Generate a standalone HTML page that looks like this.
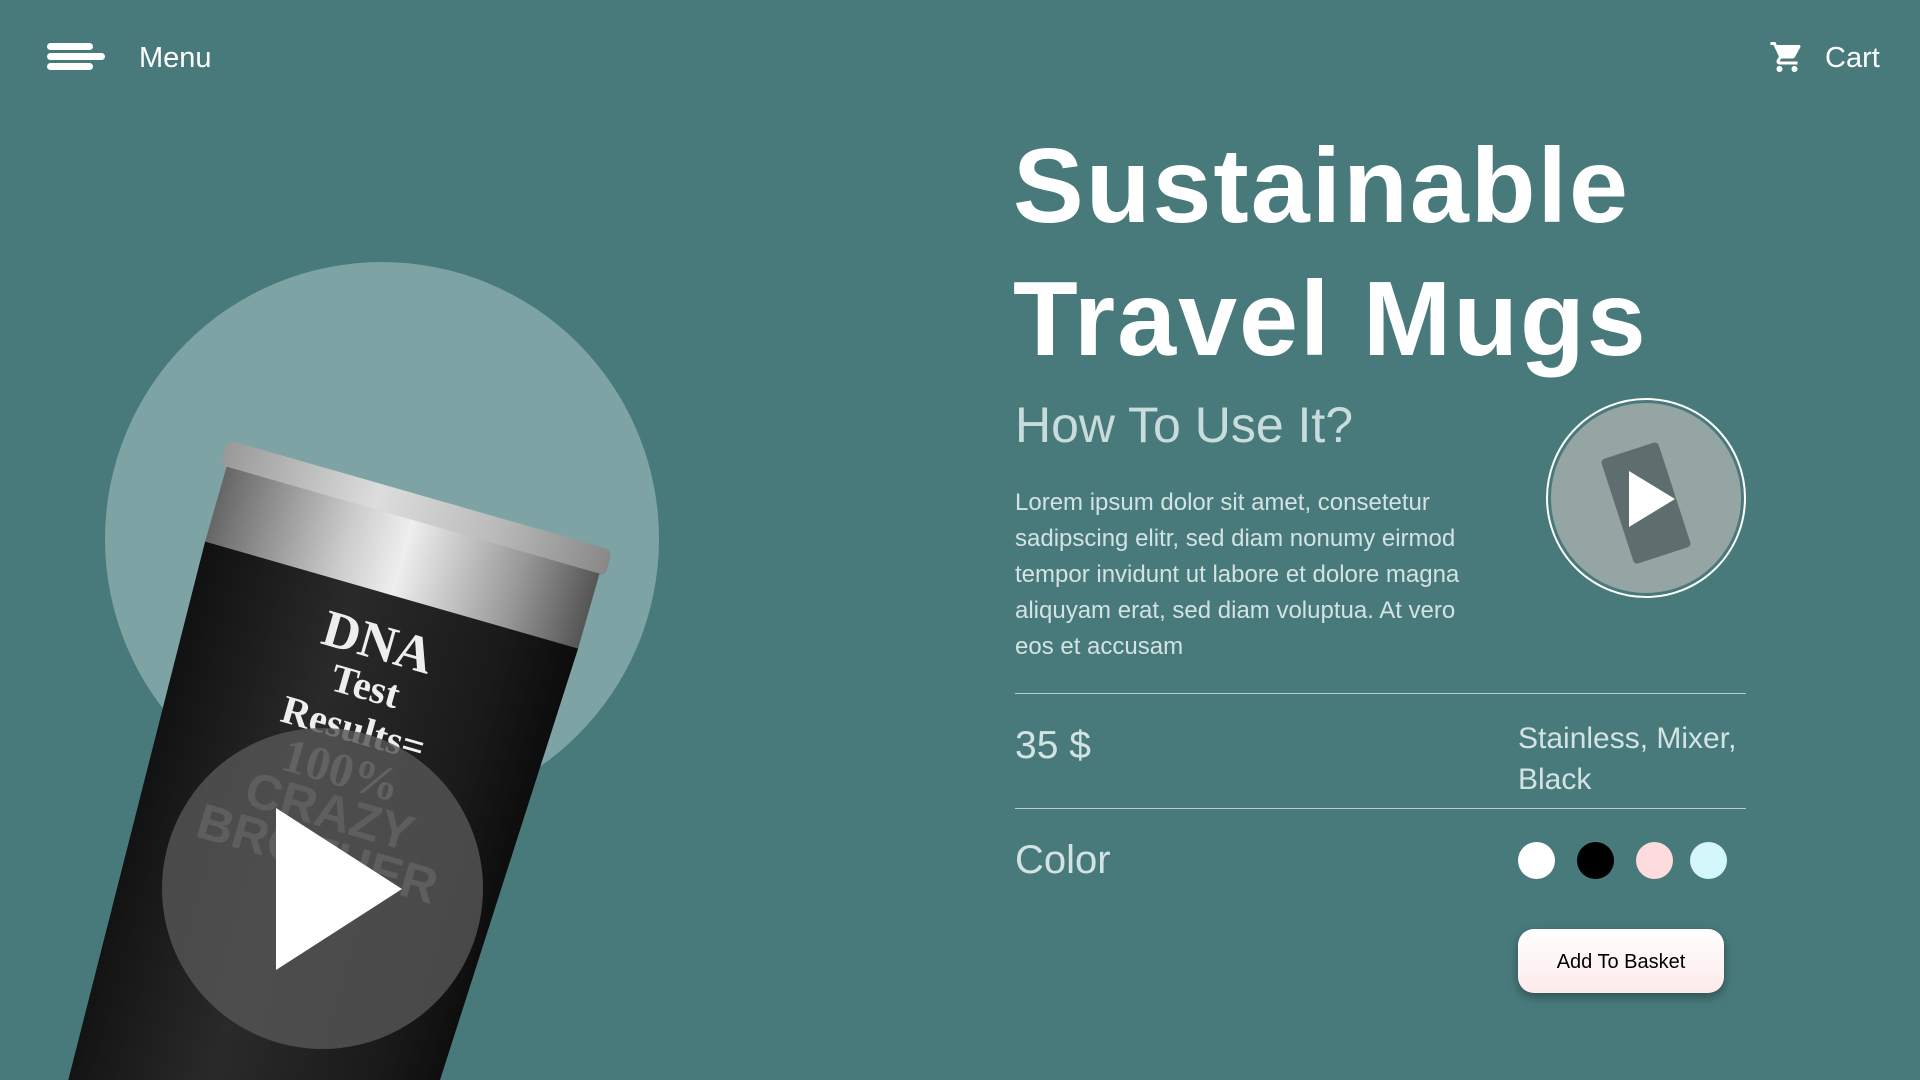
<!DOCTYPE html>
<html><head><meta charset="utf-8"><style>
*{margin:0;padding:0;box-sizing:border-box}
html,body{width:1920px;height:1080px;overflow:hidden;background:#487a7c}
body{font-family:"Liberation Sans",sans-serif;color:#fff}
#wrap{position:relative;width:1920px;height:1080px;overflow:hidden}
.abs{position:absolute}
</style></head><body><div id="wrap">
<div class="abs" style="left:47px;top:43px;width:58px">
<div style="height:7px;width:46px;background:#fff;border-radius:4px"></div>
<div style="height:7px;width:58px;background:#fff;border-radius:4px;margin-top:3px"></div>
<div style="height:7px;width:46px;background:#fff;border-radius:4px;margin-top:3px"></div>
</div>
<div class="abs" style="left:139px;top:42px;font-size:29px">Menu</div>
<svg class="abs" style="left:1769px;top:39px" width="36" height="36" viewBox="0 0 24 24"><path fill="#fff" d="M7 18c-1.1 0-2 .9-2 2s.9 2 2 2 2-.9 2-2-.9-2-2-2zM1 2v2h2l3.6 7.59-1.35 2.45c-.16.28-.25.61-.25.96 0 1.1.9 2 2 2h12v-2H7.42c-.14 0-.25-.11-.25-.25l.03-.12.9-1.63h7.45c.75 0 1.41-.41 1.75-1.03l3.58-6.49A1 1 0 0 0 20 4H5.21l-.94-2H1zm16 16c-1.1 0-2 .9-2 2s.9 2 2 2 2-.9 2-2-.9-2-2-2z"/></svg>
<div class="abs" style="left:1825px;top:42px;font-size:29px">Cart</div>

<div class="abs" style="left:105px;top:262px;width:554px;height:554px;border-radius:50%;background:#7ea3a4"></div>
<svg class="abs" style="left:0;top:0" width="760" height="1080">
<defs>
<linearGradient id="lid" x1="0" x2="1"><stop offset="0" stop-color="#999"/><stop offset=".4" stop-color="#ddd"/><stop offset=".7" stop-color="#bbb"/><stop offset="1" stop-color="#888"/></linearGradient>
<linearGradient id="band" x1="0" x2="1"><stop offset="0" stop-color="#666"/><stop offset=".35" stop-color="#ccc"/><stop offset=".5" stop-color="#eee"/><stop offset=".8" stop-color="#999"/><stop offset="1" stop-color="#555"/></linearGradient>
<linearGradient id="body" x1="0" x2="1"><stop offset="0" stop-color="#111"/><stop offset=".4" stop-color="#2a2a2a"/><stop offset=".8" stop-color="#1a1a1a"/><stop offset="1" stop-color="#0c0c0c"/></linearGradient>
</defs>
<g transform="rotate(16 228 440)">
<rect x="228" y="440" width="400" height="28" rx="8" fill="url(#lid)"/>
<rect x="234" y="466" width="388" height="80" fill="url(#band)"/>
<polygon points="234,544 622,544 599,1300 257,1300" fill="url(#body)"/>
<g font-family="Liberation Serif,serif" font-weight="bold" text-anchor="middle" fill="#eee">
<text x="428" y="610" font-size="52">DNA</text>
<text x="428" y="652" font-size="40">Test</text>
<text x="428" y="696" font-size="40">Results=</text>
<text x="428" y="742" font-size="48" fill="#999">100%</text>
<text x="428" y="786" font-size="50" fill="#888" font-family="Liberation Sans,sans-serif">CRAZY</text>
<text x="428" y="830" font-size="50" fill="#888" font-family="Liberation Sans,sans-serif">BROTHER</text>
</g>
</g>
</svg>
<div class="abs" style="left:162px;top:728px;width:321px;height:321px;border-radius:50%;background:rgba(85,85,85,.82)"></div>
<svg class="abs" style="left:276px;top:808px" width="128" height="162"><polygon points="0,0 0,162 126,81" fill="#fff"/></svg>

<div class="abs" style="left:1013px;top:120px;font-size:106px;font-weight:bold;line-height:133px;letter-spacing:2px">Sustainable<br>Travel Mugs</div>
<div class="abs" style="left:1015px;top:396px;font-size:50px;color:#c9dcdc">How To Use It?</div>
<div class="abs" style="left:1015px;top:485px;width:480px;font-size:24px;line-height:36px;color:#d3e2e2">Lorem ipsum dolor sit amet, consetetur sadipscing elitr, sed diam nonumy eirmod tempor invidunt ut labore et dolore magna aliquyam erat, sed diam voluptua. At vero eos et accusam</div>
<div class="abs" style="left:1546px;top:398px;width:200px;height:200px;border-radius:50%;border:2px solid #fff;padding:3px"><div style="width:100%;height:100%;border-radius:50%;background:#95a5a3;position:relative;overflow:hidden">
<div style="position:absolute;left:65px;top:45px;width:60px;height:110px;background:#5e6e6e;transform:rotate(-18deg);border-radius:4px"></div>
<svg style="position:absolute;left:78px;top:68px" width="48" height="56"><polygon points="0,0 0,56 46,28" fill="#fff"/></svg></div></div>

<div class="abs" style="left:1015px;top:693px;width:731px;height:1px;background:#b8cfcf"></div>
<div class="abs" style="left:1015px;top:808px;width:731px;height:1px;background:#b8cfcf"></div>
<div class="abs" style="left:1015px;top:724px;font-size:39px;color:#d3e2e2">35 $</div>
<div class="abs" style="left:1518px;top:718px;font-size:30px;line-height:41px;color:#d3e2e2">Stainless, Mixer,<br>Black</div>
<div class="abs" style="left:1015px;top:838px;font-size:40px;color:#d3e2e2">Color</div>
<div class="abs" style="left:1518px;top:842px;width:37px;height:37px;border-radius:50%;background:#fff"></div>
<div class="abs" style="left:1577px;top:842px;width:37px;height:37px;border-radius:50%;background:#000"></div>
<div class="abs" style="left:1636px;top:842px;width:37px;height:37px;border-radius:50%;background:#fcdcdc"></div>
<div class="abs" style="left:1690px;top:842px;width:37px;height:37px;border-radius:50%;background:#d4f7fb"></div>
<div class="abs" style="left:1518px;top:929px;width:206px;height:64px;border-radius:16px;background:linear-gradient(#fff,#fdeaea);box-shadow:0 4px 10px rgba(0,0,0,.35);color:#000;font-size:20px;text-align:center;line-height:66px">Add To Basket</div>
</div></body></html>
